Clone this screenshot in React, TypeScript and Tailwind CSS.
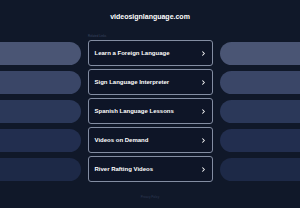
import { ChevronRight } from 'lucide-react';

const links = [
  'Learn a Foreign Language',
  'Sign Language Interpreter',
  'Spanish Language Lessons',
  'Videos on Demand',
  'River Rafting Videos',
];

const pillColors = ['bg-[#4a5574]', 'bg-[#3a4667]', 'bg-[#2b3859]', 'bg-[#222e4f]', 'bg-[#1d2947]'];

export default function App() {
  return (
    <div
      className="w-[300px] h-[208px] bg-[#101829] flex flex-col overflow-hidden"
      style={{ fontFamily: '"Liberation Sans", Arial, sans-serif' }}
    >
      <div className="h-[34px] pt-[12px] text-center text-white font-bold text-[7px] leading-[10px]">
        videosignlanguage.com
      </div>
      <div className="h-[6px] pl-[88px] text-[3px] leading-[4px] text-[#3b4763]">Related Links</div>
      <div className="flex flex-col gap-[3px]">
        {links.map((label, i) => (
          <div key={label} className="flex items-center gap-[7px] h-[26px]">
            <div className={`flex-1 h-[23px] rounded-r-full ${pillColors[i]}`} />
            <div className="w-[125px] h-[26px] flex items-center justify-between pl-[6px] pr-[5px] rounded-[3px] border border-[#838da2] bg-[#0e1527]">
              <span className="text-white font-bold text-[6px] leading-none">{label}</span>
              <ChevronRight className="w-[7px] h-[7px] text-white" strokeWidth={3.5} />
            </div>
            <div className={`flex-1 h-[23px] rounded-l-full ${pillColors[i]}`} />
          </div>
        ))}
      </div>
      <div className="mt-[13px] text-center text-[3px] leading-[4px] text-[#2f3a55]">Privacy Policy</div>
    </div>
  );
}
